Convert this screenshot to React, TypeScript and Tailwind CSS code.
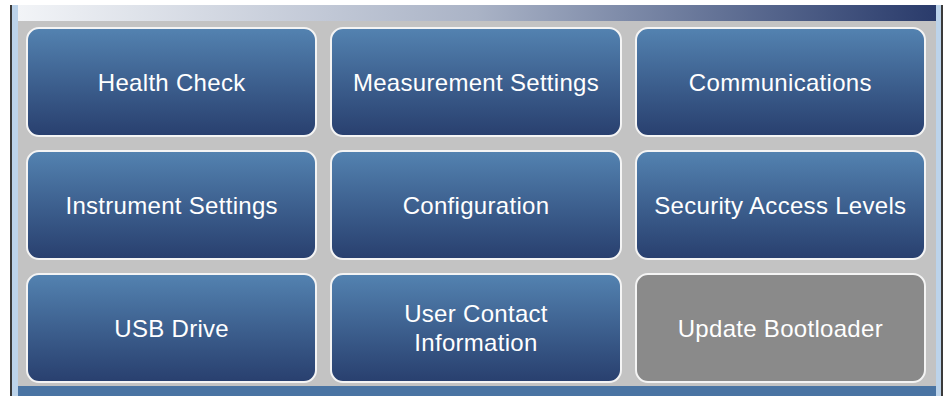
import React from 'react';

const items = [
  { label: 'Health Check' },
  { label: 'Measurement Settings' },
  { label: 'Communications' },
  { label: 'Instrument Settings' },
  { label: 'Configuration' },
  { label: 'Security Access Levels' },
  { label: 'USB Drive' },
  { label: 'User Contact\nInformation' },
  { label: 'Update Bootloader', disabled: true },
];

const MenuButton = ({ label, disabled }: { label: string; disabled?: boolean }) => (
  <div
    className={`flex items-center justify-center h-[110px] rounded-[13px] border-2 border-[#f4f4f4] text-white text-[24px] leading-[29px] tracking-[0.3px] text-center whitespace-pre-line ${
      disabled ? 'bg-[#8a8a8a]' : 'bg-gradient-to-b from-[#5382b0] to-[#29406f]'
    }`}
  >
    {label}
  </div>
);

export default function App() {
  return (
    <div className="w-[950px] h-[396px] bg-white flex pt-[5px] overflow-hidden" style={{ fontFamily: '"Liberation Sans", Arial, sans-serif' }}>
      <div className="w-[10px] shrink-0" />
      <div className="w-[2px] shrink-0 bg-[#3a3a3a]" />
      <div className="w-[6px] shrink-0 bg-[#bcd3ea]" />
      <div className="flex-1 flex flex-col bg-[#c3c3c3]">
        <div className="h-[16px] bg-gradient-to-r from-[#f2f4f7] via-[#aab3c6] to-[#2a3b6b]" />
        <div className="grid grid-cols-3 gap-x-[13px] gap-y-[13px] pl-[8px] pr-[10px] pt-[6px] pb-[3px]">
          {items.map((it) => (
            <MenuButton key={it.label} label={it.label} disabled={it.disabled} />
          ))}
        </div>
        <div className="flex-1 bg-[#4a74a3]" />
      </div>
      <div className="w-[5px] shrink-0 bg-[#bcd3ea]" />
      <div className="w-[2px] shrink-0 bg-[#3a3a3a]" />
      <div className="w-[7px] shrink-0" />
    </div>
  );
}
